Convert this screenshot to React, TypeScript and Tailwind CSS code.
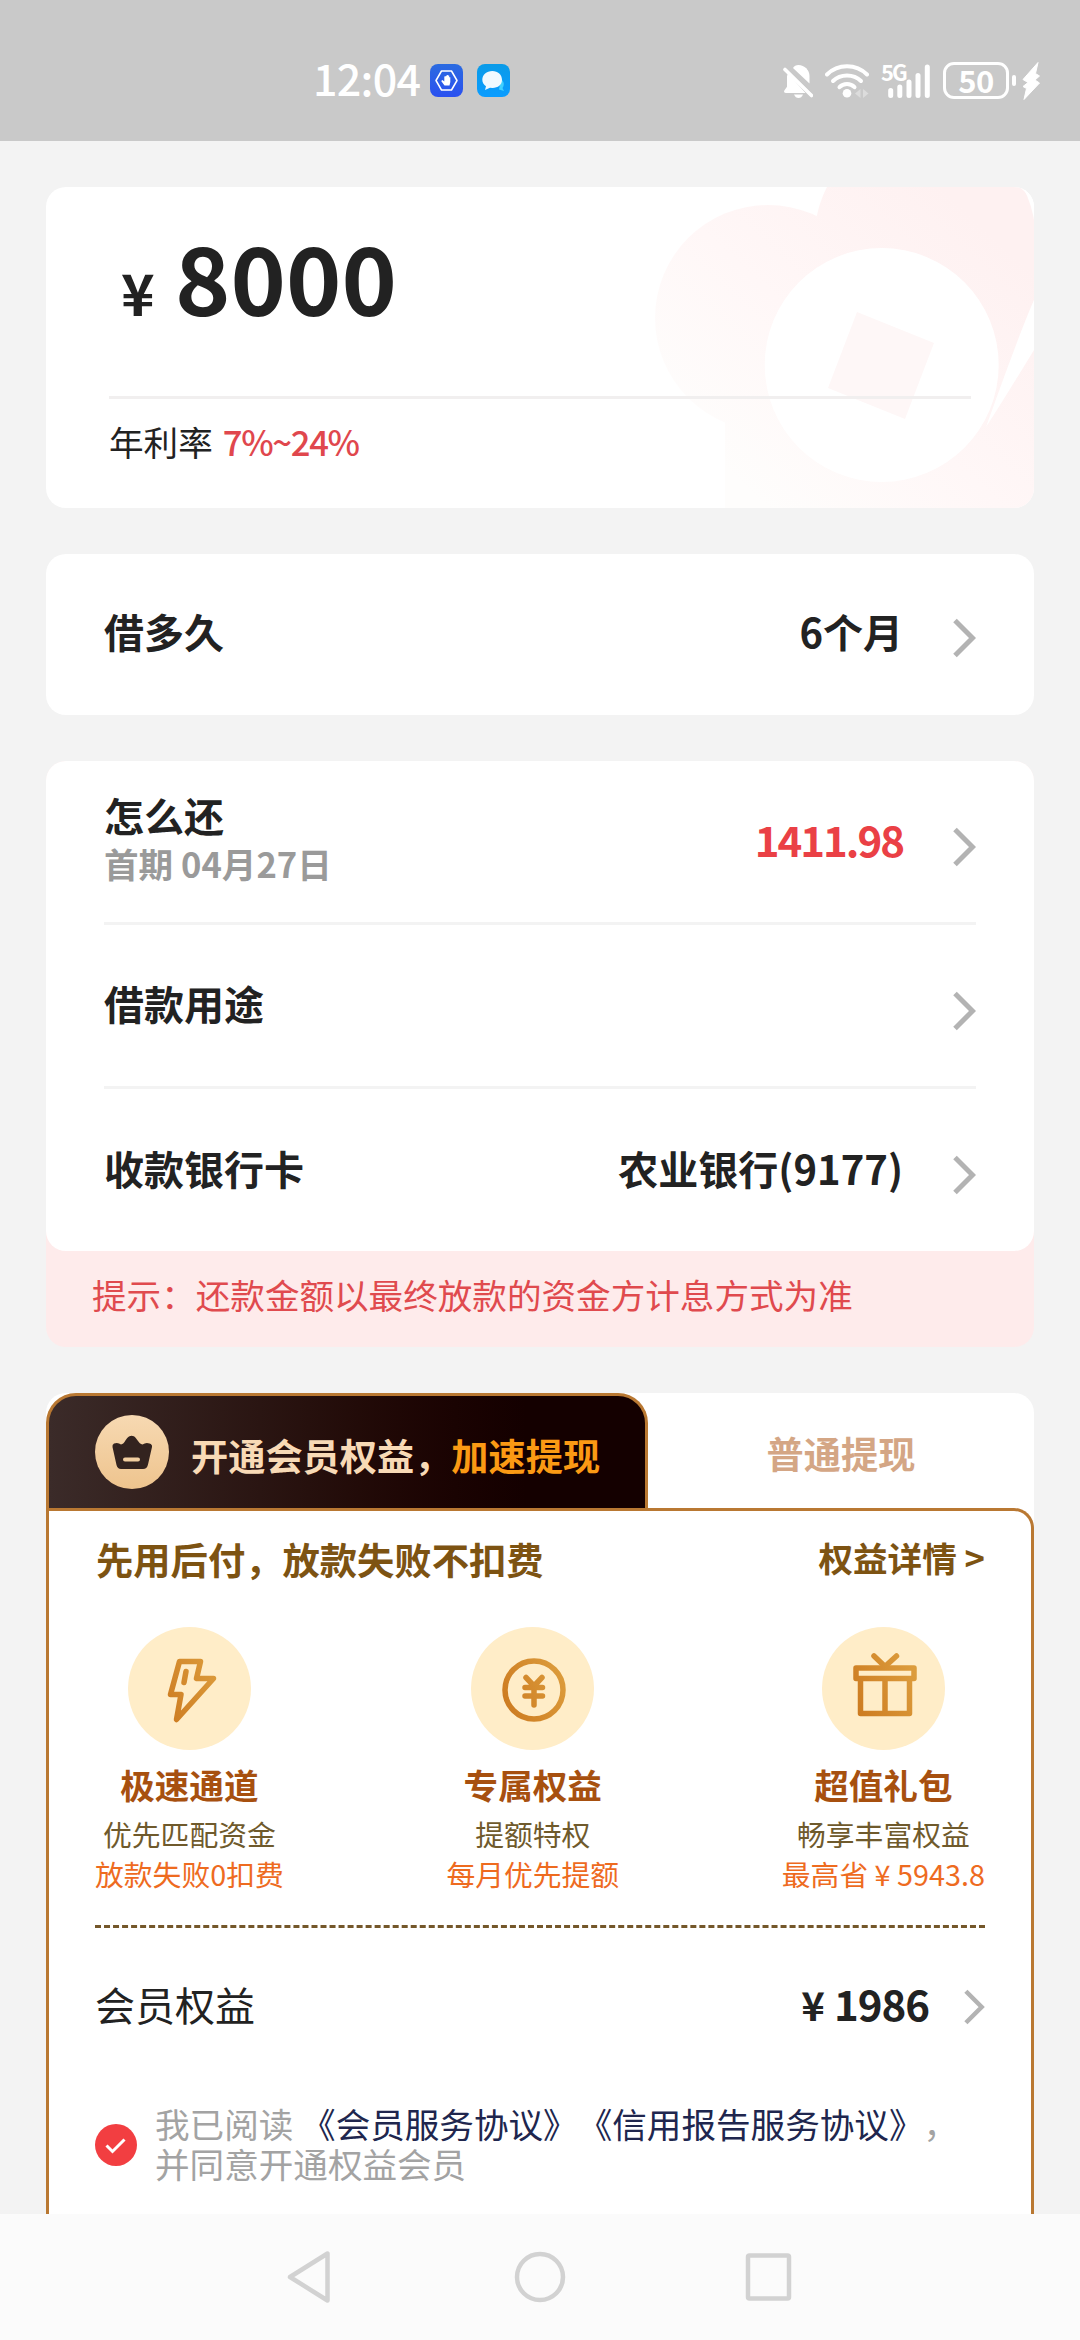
import React from 'react';

interface ChevronProps {
  className?: string;
}

const Chevron: React.FC<ChevronProps> = ({ className = 'w-6 h-10' }) => (
  <svg viewBox="0 0 24 40" className={`shrink-0 ${className}`} fill="none">
    <path d="M3 2.5 L20.5 20 L3 37.5" stroke="#b3b3b3" strokeWidth="5" />
  </svg>
);

const StatusBar: React.FC = () => (
  <header className="flex h-[141px] items-center bg-[#c9c9c9] pt-[20px] pl-[313px] pr-[39px] text-white">
    <span className="mb-[7px] w-[117px] text-[43px] leading-[50px] font-medium tracking-[-0.7px] whitespace-nowrap">12:04</span>
    <svg viewBox="0 0 33 33" className="h-[33px] w-[33px]" fill="none">
      <defs>
        <linearGradient id="guard" x1="0" y1="0" x2="0" y2="1">
          <stop offset="0" stopColor="#2b6be0" />
          <stop offset="1" stopColor="#2a50f0" />
        </linearGradient>
      </defs>
      <rect width="33" height="33" rx="8" fill="url(#guard)" />
      <path d="M11.5 7 H21.5 L27 16.5 L21.5 26 H11.5 L6 16.5 Z" stroke="#fff" strokeWidth="1.5" strokeLinejoin="round" />
      <path d="M14.3 12.5 V17.5 L12.4 16 L11.2 17 L14.5 21.5 H19.5 L20.3 18 V13.2 H19.2 V11.5 H17.9 V11 H16.6 V12 Z" fill="#fff" />
    </svg>
    <svg viewBox="0 0 33 33" className="ml-[14px] h-[33px] w-[33px]" fill="none">
      <defs>
        <linearGradient id="chat" x1="0" y1="0" x2="0" y2="1">
          <stop offset="0" stopColor="#0a9be8" />
          <stop offset="1" stopColor="#0a9cff" />
        </linearGradient>
      </defs>
      <rect width="33" height="33" rx="8" fill="url(#chat)" />
      <path d="M24 15 C28 18 27 22 25.5 24 L27 27 L22 25.5 Z" fill="#3fd0ff" />
      <path d="M15.3 7 C21 7 25 10.8 25 15.8 C25 20.8 21 24 15.5 24 L13 23.8 L8 26 L9 22.3 C6.8 20.8 5.3 18.5 5.3 15.8 C5.3 10.8 9.6 7 15.3 7 Z" fill="#f0f9ff" />
    </svg>

    <div className="ml-auto flex items-center">
      <svg viewBox="0 0 30 34" className="h-[34px] w-[30px]" fill="#fff">
        <path d="M10 4 C11 2 13 1 15.5 1 C21.5 1 26.5 6 26.5 12 V19.5 Z" />
        <path d="M5 9.5 L22.5 29 H3 C1 29 0.5 27.5 1.5 26.3 L4 22.8 V12 Z" />
        <path d="M11 30.5 H20 C19 33 17.5 34 15.5 34 C13.5 34 12 33 11 30.5 Z" />
        <path d="M2 5.5 L28.5 31.5" stroke="#fff" strokeWidth="3.6" strokeLinecap="round" />
        <path d="M5 3.5 L29 27.5" stroke="#c9c9c9" strokeWidth="2" />
      </svg>
      <svg viewBox="0 0 44 34" className="ml-3 h-[34px] w-[44px]" fill="none" stroke="#fff" strokeWidth="4" strokeLinecap="round">
        <path d="M2 10.5 C13 -0.5 31 -0.5 42 10.5" />
        <path d="M8 17 C15.5 9.5 28.5 9.5 36 17" />
        <path d="M14.5 23.2 C18.5 19 25.5 19 29.5 23.2" />
        <circle cx="22" cy="29.3" r="4.3" fill="#fff" stroke="none" />
        <path d="M30 29.5 L35.5 25 V34 Z M43.5 29.5 L38 25 V34 Z" fill="#dcdcdc" stroke="none" />
      </svg>
      <div className="ml-3 flex h-[34px] w-[50px] items-end">
        <span className="h-[34px] w-0 text-[22px] leading-[14px] font-bold tracking-[-2px] whitespace-nowrap">5G</span>
        <svg viewBox="0 0 50 34" className="h-[34px] w-[50px] shrink-0" stroke="#fff" strokeWidth="5" strokeLinecap="round">
          <path d="M9.7 26.5 V31.5 M18.8 23 V31.5 M28 18 V31.5 M37 11.5 V31.5 M46.3 3 V31.5" />
        </svg>
      </div>
      <div className="ml-[12px] flex h-[37px] w-[66px] items-center justify-center rounded-[11px] border-[3px] border-white pb-[3px] text-[31px] leading-[31px] font-bold tracking-[-0.5px]">
        50
      </div>
      <div className="ml-[3px] h-[11px] w-1 rounded-full bg-white" />
      <svg viewBox="0 0 19 38" className="ml-[6px] h-[38px] w-[19px]" fill="#fff" stroke="#fff" strokeWidth="1" strokeLinejoin="round">
        <path d="M16 0.5 L1 17.5 L6 20.5 L1 24.5 L4.5 26.5 L2 37.5 L17.5 21 L13 18 L17.5 14 L13.5 11.5 Z" />
      </svg>
    </div>
  </header>
);

// Pale coin and heart shapes behind the loan amount
const AmountArt: React.FC = () => (
  <svg viewBox="0 0 988 321" className="absolute inset-0 h-full w-full">
    <defs>
      <linearGradient id="blush" gradientUnits="userSpaceOnUse" x1="960" y1="60" x2="720" y2="320">
        <stop offset="0" stopColor="#fef1f1" />
        <stop offset="0.55" stopColor="#fff7f7" />
        <stop offset="1" stopColor="#fefdfc" />
      </linearGradient>
    </defs>
    <g fill="url(#blush)">
      <circle cx="722" cy="131" r="113" />
      <circle cx="879" cy="51" r="110.5" />
      <path d="M679 131 H800 V51 H988 V321 H679 Z" />
    </g>
    <path d="M974 0 Q984 8 988 26 V0 Z" fill="#fff" />
    <path d="M988 113 Q975 142 940 240 Q952 222 988 163 Z" fill="#fff" />
    <circle cx="835.7" cy="178" r="117" fill="#fff" />
    <path d="M811 125 L888 156 L859 232 L782 201 Z" fill="#fef7f7" />
  </svg>
);

const AmountCard: React.FC = () => (
  <section className="relative h-[321px] overflow-hidden rounded-[20px] bg-white">
    <AmountArt />
    <div className="relative pr-[63px] pl-[63px]">
      <div className="flex h-[209px] items-baseline pt-[20px] pl-[12px] font-bold">
        <span className="w-[54px] text-[57px] leading-none">¥</span>
        <span className="text-[94px] leading-[136px]">8000</span>
      </div>
      <div className="h-[3px] bg-[#f1efef]" />
      <div className="flex items-baseline pt-[17px] text-[34.6px] leading-[50px]">
        <span>年利率</span>
        <span className="ml-[10px] font-medium tracking-[-1.3px] text-[#e0474d]">7%~24%</span>
      </div>
    </div>
  </section>
);

interface LoanRowProps {
  label: string;
  hint?: string;
  value?: string;
  valueClass?: string;
  className?: string;
}

const LoanRow: React.FC<LoanRowProps> = ({ label, hint, value, valueClass = 'text-[40px]', className = '' }) => (
  <div className={`flex items-center ${className}`}>
    <div>
      <div className="text-[40px] leading-[48px] font-bold">{label}</div>
      {hint && <div className="text-[34.6px] leading-[48px] font-bold text-[#9a9a9a]">{hint}</div>}
    </div>
    {value && <div className={`mr-[49px] ml-auto leading-[48px] font-bold ${valueClass}`}>{value}</div>}
    <Chevron className={value ? 'mt-[15px] h-10 w-6' : 'mt-[15px] ml-auto h-10 w-6'} />
  </div>
);

const CrownBadge: React.FC = () => (
  <svg viewBox="0 0 74 74" className="h-[74px] w-[74px] shrink-0">
    <defs>
      <linearGradient id="badge" x1="0" y1="0" x2="0" y2="1">
        <stop offset="0" stopColor="#f7d9b2" />
        <stop offset="1" stopColor="#eec48e" />
      </linearGradient>
    </defs>
    <circle cx="37" cy="37" r="37" fill="url(#badge)" />
    <path
      d="M19 28.5 Q23 27 26 29.5 C30 29 31 22.5 34.5 21.3 Q36.5 20.3 38.8 21.3 C42 23 43.5 29 47.5 29.5 Q51 27 54.5 28.5 Q57.5 29.5 57 32 L53 49.5 Q52 54 48 54 H26 Q22.500 54 21.5 50 L17.500 32 Q17 29.5 19 28.5 Z"
      fill="#33231f"
    />
    <path d="M30 44.5 H43" stroke="#f3cfa0" strokeWidth="4" strokeLinecap="round" />
  </svg>
);

const GoldGradient: React.FC<{ id: string }> = ({ id }) => (
  <defs>
    <linearGradient id={id} gradientUnits="userSpaceOnUse" x1="30" y1="80" x2="95" y2="50">
      <stop offset="0" stopColor="#cc7a20" />
      <stop offset="1" stopColor="#dc9c3c" />
    </linearGradient>
  </defs>
);

const BoltIcon: React.FC = () => (
  <svg viewBox="0 0 123 123" className="h-full w-full" fill="none" stroke="url(#gold-bolt)" strokeWidth="5.5" strokeLinecap="round" strokeLinejoin="round">
    <GoldGradient id="gold-bolt" />
    <path d="M51.5 34.5 H72.5 L68.5 51.5 H85.5 L48.5 92.5 L53 67.5 H42.5 Z" />
    <path d="M58 44.5 L56 55.5" />
  </svg>
);

const CoinIcon: React.FC = () => (
  <svg viewBox="0 0 123 123" className="h-full w-full" fill="none" stroke="url(#gold-coin)" strokeWidth="5.5" strokeLinecap="round" strokeLinejoin="round">
    <GoldGradient id="gold-coin" />
    <circle cx="63" cy="63" r="29" />
    <path d="M55 50.5 L63 59 L71 50.5 M54 60.5 H71.5 M54 69 H71.5 M63 60 V78" />
  </svg>
);

const GiftIcon: React.FC = () => (
  <svg viewBox="0 0 123 123" className="h-full w-full" fill="none" stroke="url(#gold-gift)" strokeWidth="5.5" strokeLinecap="round" strokeLinejoin="round">
    <GoldGradient id="gold-gift" />
    <path d="M34 41 H92 V51.5 H34 Z" />
    <path d="M38.5 52 V86.5 H87.5 V52 M63 52 V86 M52 29 L63 39.5 L74.5 29" />
  </svg>
);

const perks = [
  { icon: <BoltIcon />, title: '极速通道', desc: '优先匹配资金', note: '放款失败0扣费' },
  { icon: <CoinIcon />, title: '专属权益', desc: '提额特权', note: '每月优先提额' },
  { icon: <GiftIcon />, title: '超值礼包', desc: '畅享丰富权益', note: '最高省 ¥ 5943.8' },
];

const MemberPanel: React.FC = () => (
  <section className="flex h-[821px] flex-col rounded-t-[20px] bg-white">
    <div className="flex h-[115px] shrink-0">
      <div className="flex w-[602px] items-center rounded-t-[30px] border-[3px] border-b-0 border-[#b97832] bg-linear-to-r from-[#3b2b29] to-[#140000] to-80% pl-[46px]">
        <CrownBadge />
        <div className="ml-[22px] pt-[6px] text-[37.2px] leading-[50px] font-bold whitespace-nowrap text-[#f8dab6]">
          开通会员权益，<span className="text-[#fb9a14]">加速提现</span>
        </div>
      </div>
      <div className="flex flex-1 items-center justify-center pt-1 text-[37.2px] leading-[50px] font-bold text-[#d4a685]">普通提现</div>
    </div>

    <div className="flex-1 rounded-tr-[20px] border-[3px] border-b-0 border-[#b97832] px-[46px]">
      <div className="flex items-start justify-between pt-[22px] pl-px font-bold text-[#7d5312]">
        <div className="text-[37.3px] leading-[52px]">先用后付，放款失败不扣费</div>
        <div className="text-[34.6px] leading-[48px]">权益详情 &gt;</div>
      </div>

      <div className="mt-[42px] flex justify-between">
        {perks.map((perk) => (
          <div key={perk.title} className="flex flex-col items-center whitespace-nowrap">
            <div className="h-[123px] w-[123px] rounded-full bg-[#ffedc8]">{perk.icon}</div>
            <div className="mt-[9px] text-[34.6px] leading-[50px] font-bold text-[#a7500f]">{perk.title}</div>
            <div className="mt-[5px] text-[28.8px] leading-[40px] text-[#6f5a2c]">{perk.desc}</div>
            <div className="text-[28.8px] leading-[40px] text-[#ee6b1f]">{perk.note}</div>
          </div>
        ))}
      </div>

      <div className="mt-[31px] border-t-[3px] border-dashed border-[#74572a]" />

      <div className="mt-[45px] flex items-center">
        <div className="text-[40px] leading-[60px]">会员权益</div>
        <div className="mr-[34px] ml-auto flex items-baseline font-bold">
          <span className="mr-[9px] text-[40px] leading-[60px]">¥</span>
          <span className="text-[42px] leading-[60px] tracking-[-1px]">1986</span>
        </div>
        <Chevron className="mt-[6px] h-[36px] w-[22px]" />
      </div>

      <div className="mt-[69px] flex items-center">
        <svg viewBox="0 0 42 42" className="mt-[4px] h-[42px] w-[42px] shrink-0" fill="none">
          <circle cx="21" cy="21" r="21" fill="#f23e41" />
          <path d="M11.5 21.5 L17.5 27.5 L29.5 15.5" stroke="#fff" strokeWidth="3" />
        </svg>
        <div className="ml-[18px] text-[34.6px] leading-[40px] whitespace-nowrap text-[#a3a3a3] [text-spacing-trim:space-all]">
          我已阅读 <span className="text-[#20264e]">《会员服务协议》《信用报告服务协议》</span>，
          <br />
          并同意开通权益会员
        </div>
      </div>
    </div>
  </section>
);

const NavBar: React.FC = () => (
  <nav className="flex h-[126px] items-center bg-[#fbfbfb] pl-[284px]">
    <svg viewBox="0 0 508 54" className="h-[54px] w-[508px]" fill="none" stroke="#d2d2d2" strokeWidth="4.5" strokeLinejoin="round">
      <path d="M6 27 L43.5 3.5 V50.5 Z" />
      <circle cx="256" cy="27" r="23" />
      <rect x="464" y="5.5" width="41" height="43" rx="1.5" />
    </svg>
  </nav>
);

const App: React.FC = () => {
  return (
    <div className="flex h-[2340px] w-[1080px] flex-col overflow-hidden bg-[#f3f3f3] font-['Noto_Sans_CJK_SC',sans-serif] text-[#222]">
      <StatusBar />
      <main className="flex h-[2073px] flex-col px-[46px] pt-[46px]">
        <AmountCard />

        <section className="mt-[46px] rounded-[20px] bg-white px-[58px]">
          <LoanRow label="借多久" value="6个月" className="h-[161px] pb-[8px]" />
        </section>

        <div className="mt-[46px] rounded-[20px] bg-[#feebeb]">
          <section className="rounded-[20px] bg-white px-[58px]">
            <LoanRow
              label="怎么还"
              hint="首期 04月27日"
              value="1411.98"
              valueClass="text-[42px] tracking-[-2px] text-[#ea4045]"
              className="h-[161px] pb-[5px]"
            />
            <div className="h-[3px] bg-[#f3f3f3]" />
            <LoanRow label="借款用途" className="h-[161px] pb-[5px]" />
            <div className="h-[3px] bg-[#f3f3f3]" />
            <LoanRow
              label="收款银行卡"
              value="农业银行(9177)"
              className="h-[162px] pb-[5px]"
            />
          </section>
          <p className="h-[96px] px-[46px] pt-[18px] text-[34.6px] leading-[50px] text-[#e04a4e]">
            提示：还款金额以最终放款的资金方计息方式为准
          </p>
        </div>

        <div className="mt-[46px]">
          <MemberPanel />
        </div>
      </main>
      <NavBar />
    </div>
  );
};

export default App;
